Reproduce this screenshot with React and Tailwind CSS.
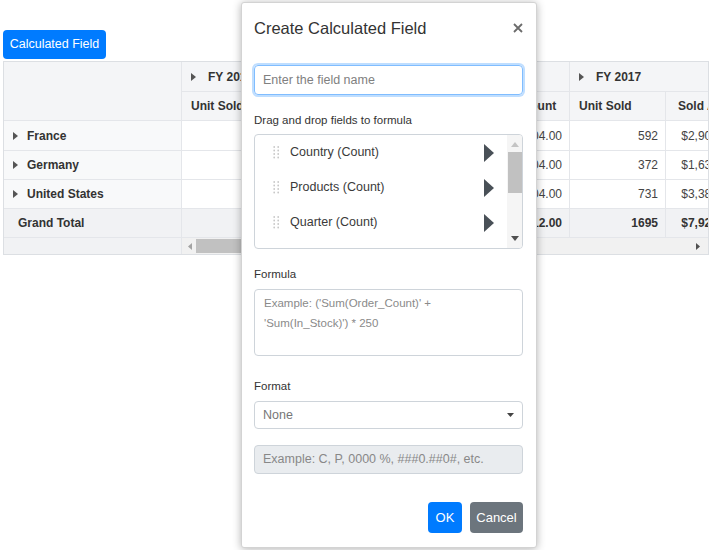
import React from 'react';

const font = { fontFamily: '"Liberation Sans", Arial, sans-serif' };

const rows = [
  { name: 'France', vals: ['480', '$1,102,300.00', '515', '$1,230,504.00', '592', '$2,904,800.00'] },
  { name: 'Germany', vals: ['312', '$720,400.00', '340', '$980,204.00', '372', '$1,634,720.00'] },
  { name: 'United States', vals: ['654', '$1,880,100.00', '690', '$1,560,304.00', '731', '$3,383,680.00'] },
];
const total = ['1446', '$3,702,800.00', '1545', '$3,771,012.00', '1695', '$7,923,200.00'];
const years = ['FY 2015', 'FY 2016', 'FY 2017'];

const Caret = ({ className = '' }) => (
  <svg width="5" height="8" viewBox="0 0 5 8" className={className}>
    <polygon points="0,0 5,4 0,8" fill="#555" />
  </svg>
);

const cell = 'border-r border-b border-[#e4e6ea] flex items-center';

const PivotTable = () => (
  <div className="mt-[2px] ml-[3px] w-[706px] border border-[#dcdfe3] overflow-hidden text-[12px] text-[#333]">
    <div className="grid grid-cols-[178px_96px_100px_92px_100px_96px_100px] grid-rows-[30px_29px_30px_29px_29px_29px] w-max">
      <div className={`${cell} row-span-2 bg-[#f4f5f7]`} />
      {years.map((y) => (
        <div key={y} className={`${cell} col-span-2 bg-[#f4f5f7] font-bold pl-[9px] gap-[12px]`}>
          <Caret />
          {y}
        </div>
      ))}
      {years.map((y) => (
        <React.Fragment key={y}>
          <div className={`${cell} bg-[#f4f5f7] font-bold pl-[9px]`}>Unit Sold</div>
          <div className={`${cell} bg-[#f4f5f7] font-bold pl-[12px] whitespace-nowrap`}>Sold Amount</div>
        </React.Fragment>
      ))}
      {rows.map((r) => (
        <React.Fragment key={r.name}>
          <div className={`${cell} bg-[#f8f9fa] font-bold pl-[9px] gap-[9px]`}>
            <Caret />
            {r.name}
          </div>
          {r.vals.map((v, i) => (
            <div key={i} className={`${cell} justify-end pr-[7px] text-[#444] whitespace-nowrap`}>{v}</div>
          ))}
        </React.Fragment>
      ))}
      <div className={`${cell} bg-[#f1f2f4] font-bold pl-[14px]`}>Grand Total</div>
      {total.map((v, i) => (
        <div key={i} className={`${cell} bg-[#f1f2f4] justify-end pr-[7px] font-bold whitespace-nowrap`}>{v}</div>
      ))}
    </div>
    <div className="flex h-[16px]">
      <div className="w-[178px] bg-[#f1f2f4] border-r border-[#e4e6ea]" />
      <div className="flex-1 bg-[#f1f1f1] flex items-center">
        <svg width="4" height="7" viewBox="0 0 4 7" className="ml-[6px]">
          <polygon points="4,0 0,3.5 4,7" fill="#a3a3a3" />
        </svg>
        <div className="ml-[4px] w-[260px] h-[14px] bg-[#c1c1c1]" />
        <div className="flex-1" />
        <svg width="4" height="7" viewBox="0 0 4 7" className="mr-[8px]">
          <polygon points="0,0 4,3.5 0,7" fill="#505050" />
        </svg>
      </div>
    </div>
  </div>
);

const Handle = () => (
  <svg width="7" height="13" viewBox="0 0 7 13">
    {[1, 4.5, 8, 11.5].map((y) => (
      <React.Fragment key={y}>
        <circle cx="1.2" cy={y} r="0.9" fill="#c8c8c8" />
        <circle cx="5.2" cy={y} r="0.9" fill="#c8c8c8" />
      </React.Fragment>
    ))}
  </svg>
);

const fields = ['Country (Count)', 'Products (Count)', 'Quarter (Count)', 'Year (Count)'];

const Dialog = () => (
  <div className="absolute left-[241px] top-[2px] w-[296px] h-[546px] bg-white border border-[#d3d3d3] rounded-[3px] shadow-[0_1px_8px_rgba(0,0,0,0.3)] px-[12px] pt-[14px] text-[#333]">
    <div className="flex items-center justify-between h-[22px]">
      <span className="text-[16.5px] leading-[22px]">Create Calculated Field</span>
      <svg width="10" height="10" viewBox="0 0 10 10" className="mr-[1px]">
        <path d="M1 1 L9 9 M9 1 L1 9" stroke="#6b6b6b" strokeWidth="1.8" />
      </svg>
    </div>
    <input
      className="mt-[26px] w-[269px] h-[30px] border border-[#80bdff] rounded-[4px] shadow-[0_0_0_2px_rgba(0,123,255,0.25)] px-[8px] text-[12.5px] outline-none placeholder:text-[#808080]"
      placeholder="Enter the field name"
    />
    <div className="mt-[17px] text-[11.5px] leading-[16px]">Drag and drop fields to formula</div>
    <div className="mt-[6px] w-[269px] h-[115px] border border-[#ced4da] rounded-[4px] flex overflow-hidden">
      <div className="flex-1 overflow-hidden">
        {fields.map((f) => (
          <div key={f} className="h-[35px] flex items-center pl-[18px] pr-[13px]">
            <Handle />
            <span className="ml-[10px] text-[12.5px] text-[#3a3a3a] flex-1">{f}</span>
            <svg width="10" height="18" viewBox="0 0 10 18">
              <polygon points="0,0 10,9 0,18" fill="#495057" />
            </svg>
          </div>
        ))}
      </div>
      <div className="w-[15px] bg-[#f5f5f5] flex flex-col items-center">
        <svg width="8" height="5" viewBox="0 0 8 5" className="mt-[7px]">
          <polygon points="0,5 4,0 8,5" fill="#c4c4c4" />
        </svg>
        <div className="mt-[5px] w-[14px] h-[41px] bg-[#c1c1c1]" />
        <div className="flex-1" />
        <svg width="8" height="5" viewBox="0 0 8 5" className="mb-[7px]">
          <polygon points="0,0 8,0 4,5" fill="#505050" />
        </svg>
      </div>
    </div>
    <div className="mt-[17px] text-[11.5px] leading-[16px]">Formula</div>
    <textarea
      className="mt-[7px] block w-[269px] h-[67px] border border-[#ced4da] rounded-[4px] px-[9px] py-[3px] text-[11.5px] leading-[20px] resize-none outline-none placeholder:text-[#8a8a8a]"
      placeholder={"Example: ('Sum(Order_Count)' +\n'Sum(In_Stock)') * 250"}
    />
    <div className="mt-[22px] text-[11.5px] leading-[16px]">Format</div>
    <div className="mt-[7px] w-[269px] h-[28px] border border-[#ced4da] rounded-[4px] flex items-center justify-between px-[8px]">
      <span className="text-[12.5px] text-[#777]">None</span>
      <svg width="7" height="4" viewBox="0 0 7 4">
        <polygon points="0,0 7,0 3.5,4" fill="#444" />
      </svg>
    </div>
    <div className="mt-[16px] w-[269px] h-[29px] border border-[#ced4da] rounded-[4px] bg-[#e9ecef] flex items-center px-[8px] text-[12.5px] text-[#888]">
      Example: C, P, 0000 %, ###0.##0#, etc.
    </div>
    <div className="mt-[28px] flex justify-end gap-[8px] w-[269px]">
      <button className="h-[31px] w-[34px] rounded-[4px] bg-[#007bff] text-white text-[13px]">OK</button>
      <button className="h-[31px] w-[53px] rounded-[4px] bg-[#6c757d] text-white text-[13px]">Cancel</button>
    </div>
  </div>
);

export default function App() {
  return (
    <div className="relative w-[710px] h-[550px] bg-white overflow-hidden" style={font}>
      <div className="pt-[30px] pl-[3px]">
        <button className="h-[29px] w-[103px] rounded-[4px] bg-[#007bff] text-white text-[12.5px]">Calculated Field</button>
      </div>
      <PivotTable />
      <Dialog />
    </div>
  );
}
